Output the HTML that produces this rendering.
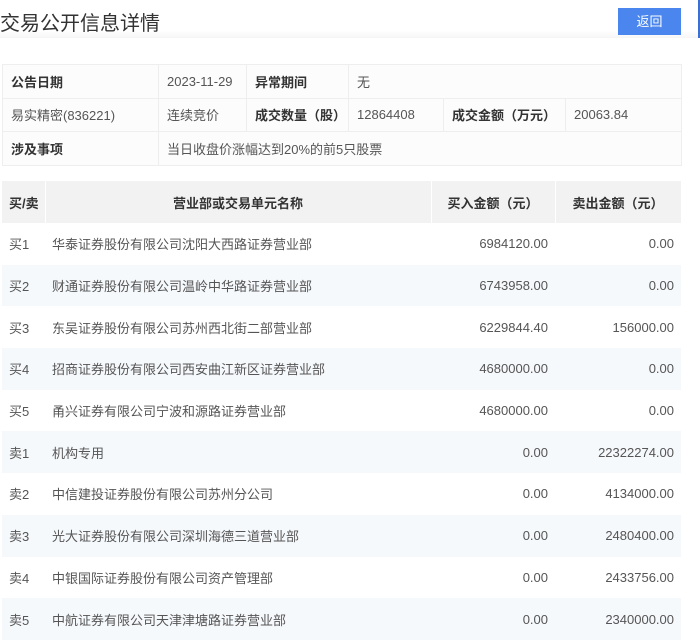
<!DOCTYPE html>
<html><head><meta charset="utf-8"><style>
*{margin:0;padding:0;box-sizing:border-box}
body{width:700px;height:643px;background:#fff;font-family:"Liberation Sans","Noto Sans CJK SC",sans-serif;font-size:13px;color:#555;position:relative;overflow:hidden}
.hdr{position:absolute;left:0;top:0;width:698px;height:38px;background:linear-gradient(#fff,#fff 80%,#f6f6f6)}
.title{position:absolute;left:0;top:7px;font-size:20px;color:#333}
.btn{position:absolute;left:618px;top:8px;width:63px;height:27px;background:#4a86ee;color:#fff;font-size:13px;text-align:center;line-height:27px}
.vline{position:absolute;left:698px;top:0;width:2px;height:38px;background:#3b6fd0}
table{position:absolute;border-collapse:collapse;table-layout:fixed}
.info{left:2px;top:64px;width:679px}
.info td{border:1px solid #eee;height:33.5px;padding:0 8px;background:#fcfcfc}
.info td.l{font-weight:bold;color:#333}
.main{left:2px;top:181px;width:679px}
.main th{background:#f2f2f2;height:42px;font-weight:bold;color:#333;border-right:1px solid #fff}
.main td{height:41.7px;padding:0 7px}
.main tr:nth-child(odd) td{background:#f6f9fc}
.r{text-align:right}
</style></head><body>
<div class="hdr"></div>
<div class="title">交易公开信息详情</div>
<div class="btn">返回</div>
<div class="vline"></div>
<table class="info">
<colgroup><col style="width:156px"><col style="width:88px"><col style="width:102px"><col style="width:95px"><col style="width:122px"><col style="width:116px"></colgroup>
<tr><td class="l">公告日期</td><td>2023-11-29</td><td class="l">异常期间</td><td colspan="3">无</td></tr>
<tr><td>易实精密(836221)</td><td>连续竞价</td><td class="l">成交数量（股）</td><td>12864408</td><td class="l">成交金额（万元）</td><td>20063.84</td></tr>
<tr><td class="l">涉及事项</td><td colspan="5">当日收盘价涨幅达到20%的前5只股票</td></tr>
</table>
<table class="main">
<colgroup><col style="width:43px"><col style="width:386px"><col style="width:124px"><col style="width:126px"></colgroup>
<tr><th style="text-align:left;padding-left:7px">买/卖</th><th>营业部或交易单元名称</th><th>买入金额（元）</th><th>卖出金额（元）</th></tr>
<tr><td>买1</td><td>华泰证券股份有限公司沈阳大西路证券营业部</td><td class="r">6984120.00</td><td class="r">0.00</td></tr>
<tr><td>买2</td><td>财通证券股份有限公司温岭中华路证券营业部</td><td class="r">6743958.00</td><td class="r">0.00</td></tr>
<tr><td>买3</td><td>东吴证券股份有限公司苏州西北街二部营业部</td><td class="r">6229844.40</td><td class="r">156000.00</td></tr>
<tr><td>买4</td><td>招商证券股份有限公司西安曲江新区证券营业部</td><td class="r">4680000.00</td><td class="r">0.00</td></tr>
<tr><td>买5</td><td>甬兴证券有限公司宁波和源路证券营业部</td><td class="r">4680000.00</td><td class="r">0.00</td></tr>
<tr><td>卖1</td><td>机构专用</td><td class="r">0.00</td><td class="r">22322274.00</td></tr>
<tr><td>卖2</td><td>中信建投证券股份有限公司苏州分公司</td><td class="r">0.00</td><td class="r">4134000.00</td></tr>
<tr><td>卖3</td><td>光大证券股份有限公司深圳海德三道营业部</td><td class="r">0.00</td><td class="r">2480400.00</td></tr>
<tr><td>卖4</td><td>中银国际证券股份有限公司资产管理部</td><td class="r">0.00</td><td class="r">2433756.00</td></tr>
<tr><td>卖5</td><td>中航证券有限公司天津津塘路证券营业部</td><td class="r">0.00</td><td class="r">2340000.00</td></tr>
</table>
</body></html>
